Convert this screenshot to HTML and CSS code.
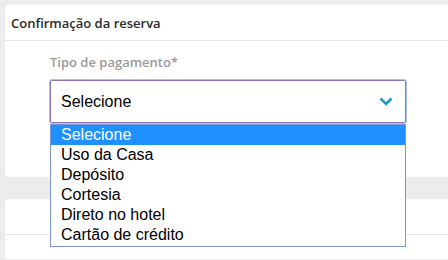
FILE: index.html
```html
<!DOCTYPE html>
<html lang="pt">
<head>
<meta charset="utf-8">
<link rel="stylesheet" href="styles.css">
</head>
<body>
<div class="page">
  <section class="card">
    <header class="card-header">Confirmação da reserva</header>
    <div class="card-body">
      <label class="field-label">Tipo de pagamento*</label>
      <div class="select-wrap">
        <div class="select">
          <span class="select-value">Selecione</span>
          <svg class="chevron" width="14" height="9" viewBox="0 0 14 9"><path d="M1.5 1.5 L7 7 L12.5 1.5" fill="none" stroke="#1a9cc0" stroke-width="2.6"/></svg>
        </div>
        <ul class="options">
          <li class="option active">Selecione</li>
          <li class="option">Uso da Casa</li>
          <li class="option">Depósito</li>
          <li class="option">Cortesia</li>
          <li class="option">Direto no hotel</li>
          <li class="option">Cartão de crédito</li>
        </ul>
      </div>
    </div>
  </section>
  <section class="card card-second">
    <header class="card-header empty"></header>
    <div class="card-body short"></div>
  </section>
</div>
</body>
</html>
```
FILE: styles.css
```css
html, body {
  margin: 0;
  padding: 0;
  background: #ebeceb;
  overflow: hidden;
  height: 260px;
}
.page {
  padding: 5px 0 0 5px;
  display: flex;
  flex-direction: column;
  gap: 22px;
  margin-right: -10px;
}
.card {
  background: #fff;
  border-radius: 3px;
}
.card-header {
  height: 36px;
  box-sizing: border-box;
  border-bottom: 1px solid #e6e6e6;
  padding: 10px 0 0 6px;
  font-family: "Open Sans", sans-serif;
  font-weight: 600;
  font-size: 13px;
  color: #2b2b2b;
  line-height: 17px;
}
.card-body {
  height: 136px;
  box-sizing: border-box;
  padding: 12px 0 0 45px;
}
.card-body.short {
  height: 24px;
}
.field-label {
  display: block;
  font-family: "Open Sans", sans-serif;
  font-weight: 600;
  font-size: 13px;
  color: #9a9a9a;
  line-height: 18px;
  margin-bottom: 9px;
}
.select-wrap {
  position: relative;
  width: 356px;
}
.select {
  height: 43px;
  box-sizing: border-box;
  border: 1px solid #8c74b0;
  box-shadow: 0 0 0 1px #aac6f2;
  border-radius: 2px;
  display: flex;
  align-items: center;
  justify-content: space-between;
  padding: 0 12px 0 10px;
  font-family: "Liberation Sans", Arial, sans-serif;
  font-size: 16px;
  color: #000;
}
.chevron {
  display: block;
}
.options {
  position: absolute;
  left: 0;
  top: 44px;
  width: 356px;
  box-sizing: border-box;
  margin: 0;
  padding: 0 0 1px 0;
  list-style: none;
  background: #fff;
  border: 1px solid #7f96d2;
  font-family: "Liberation Sans", Arial, sans-serif;
  font-size: 16px;
  color: #000;
}
.option {
  height: 20px;
  line-height: 19px;
  padding-left: 10px;
}
.option.active {
  background: #1e90ff;
  color: #fff;
}
```
